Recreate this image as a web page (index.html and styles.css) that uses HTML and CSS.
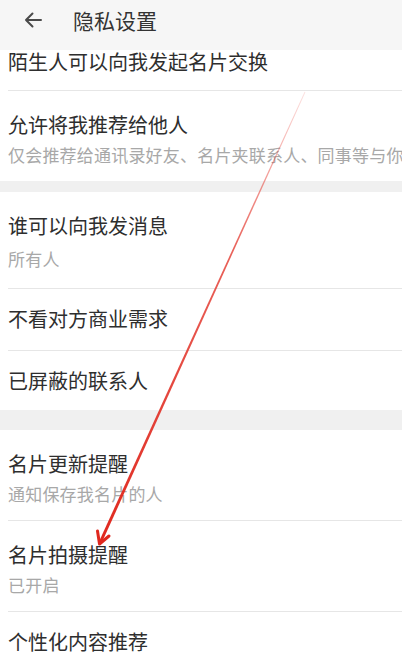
FILE: index.html
```html
<!DOCTYPE html>
<html lang="zh-CN">
<head>
<meta charset="utf-8">
<title>隐私设置</title>
<link rel="stylesheet" href="styles.css">
</head>
<body>
<div class="page">
  <header class="topbar">
    <svg class="back" width="20" height="18" viewBox="0 0 20 18"><path d="M18 9H3M9.5 2.5L3 9l6.5 6.5" fill="none" stroke="#4a4a4a" stroke-width="2" stroke-linecap="round" stroke-linejoin="round"/></svg>
    <span class="title">隐私设置</span>
  </header>
  <div class="list">
    <div class="row first"><div class="main">陌生人可以向我发起名片交换</div></div>
    <div class="row two nodiv"><div class="main">允许将我推荐给他人</div><div class="sub">仅会推荐给通讯录好友、名片夹联系人、同事等与你</div></div>
    <div class="band small"></div>
    <div class="row two tall"><div class="main">谁可以向我发消息</div><div class="sub">所有人</div></div>
    <div class="row single"><div class="main">不看对方商业需求</div></div>
    <div class="row single nodiv"><div class="main">已屏蔽的联系人</div></div>
    <div class="band"></div>
    <div class="row two"><div class="main">名片更新提醒</div><div class="sub">通知保存我名片的人</div></div>
    <div class="row two"><div class="main">名片拍摄提醒</div><div class="sub">已开启</div></div>
    <div class="row single nodiv"><div class="main">个性化内容推荐</div></div>
  </div>
  <svg class="annot" width="402" height="661" viewBox="0 0 402 661">
    <defs>
      <linearGradient id="fade" gradientUnits="userSpaceOnUse" x1="305" y1="92" x2="100" y2="543">
        <stop offset="0" stop-color="#e8392f" stop-opacity="0.15"/>
        <stop offset="0.35" stop-color="#e33a30" stop-opacity="0.8"/>
        <stop offset="1" stop-color="#e0281e" stop-opacity="1"/>
      </linearGradient>
    </defs>
    <polygon points="305.4,92.2 304.6,91.8 98.6,542.4 101.4,543.6" fill="url(#fade)"/>
    <polyline points="97.5,531 99.5,544 109,536" fill="none" stroke="#e0281e" stroke-width="3" stroke-linecap="round" stroke-linejoin="round"/>
  </svg>
</div>
</body>
</html>
```

FILE: styles.css
```css
html, body {
  margin: 0;
  padding: 0;
  background: #ffffff;
}
body {
  font-family: "Noto Sans CJK SC", "Noto Sans", sans-serif;
  color: #2e2e2e;
}
.page {
  position: relative;
  width: 402px;
  height: 661px;
  overflow: hidden;
}
.topbar {
  height: 50px;
  background: #f6f6f6;
  display: flex;
  align-items: center;
  box-sizing: border-box;
  padding-left: 23px;
}
.back {
  display: block;
  margin-top: -10px;
}
.title {
  font-size: 21px;
  line-height: 24px;
  color: #333333;
  margin-left: 30px;
  margin-top: -10px;
}
.list {
  display: flex;
  flex-direction: column;
}
.row {
  margin-left: 8px;
  display: flex;
  flex-direction: column;
  border-bottom: 1px solid #e6e6e6;
}
.row .main {
  font-size: 20px;
  line-height: 24px;
  white-space: nowrap;
  color: #2e2e2e;
}
.row .sub {
  font-size: 17px;
  line-height: 20px;
  letter-spacing: 0.2px;
  color: #a8a8a8;
  white-space: nowrap;
  margin-top: 8px;
}
.row.nodiv {
  border-bottom: none;
}
.row.first {
  height: 41px;
  box-sizing: border-box;
}
.row.two {
  height: 91px;
  box-sizing: border-box;
  padding-top: 22px;
}
.row.two.nodiv {
  height: 90px;
}
.row.two.tall {
  height: 97px;
}
.row.two.tall .sub {
  margin-top: 11px;
}
.row.single {
  height: 62px;
  box-sizing: border-box;
  padding-top: 18px;
}
.row.single.nodiv {
  height: 59px;
}
.band {
  height: 20px;
  background: #f0f0f0;
}
.band.small {
  height: 11px;
}
.annot {
  position: absolute;
  left: 0;
  top: 0;
  pointer-events: none;
}
```
